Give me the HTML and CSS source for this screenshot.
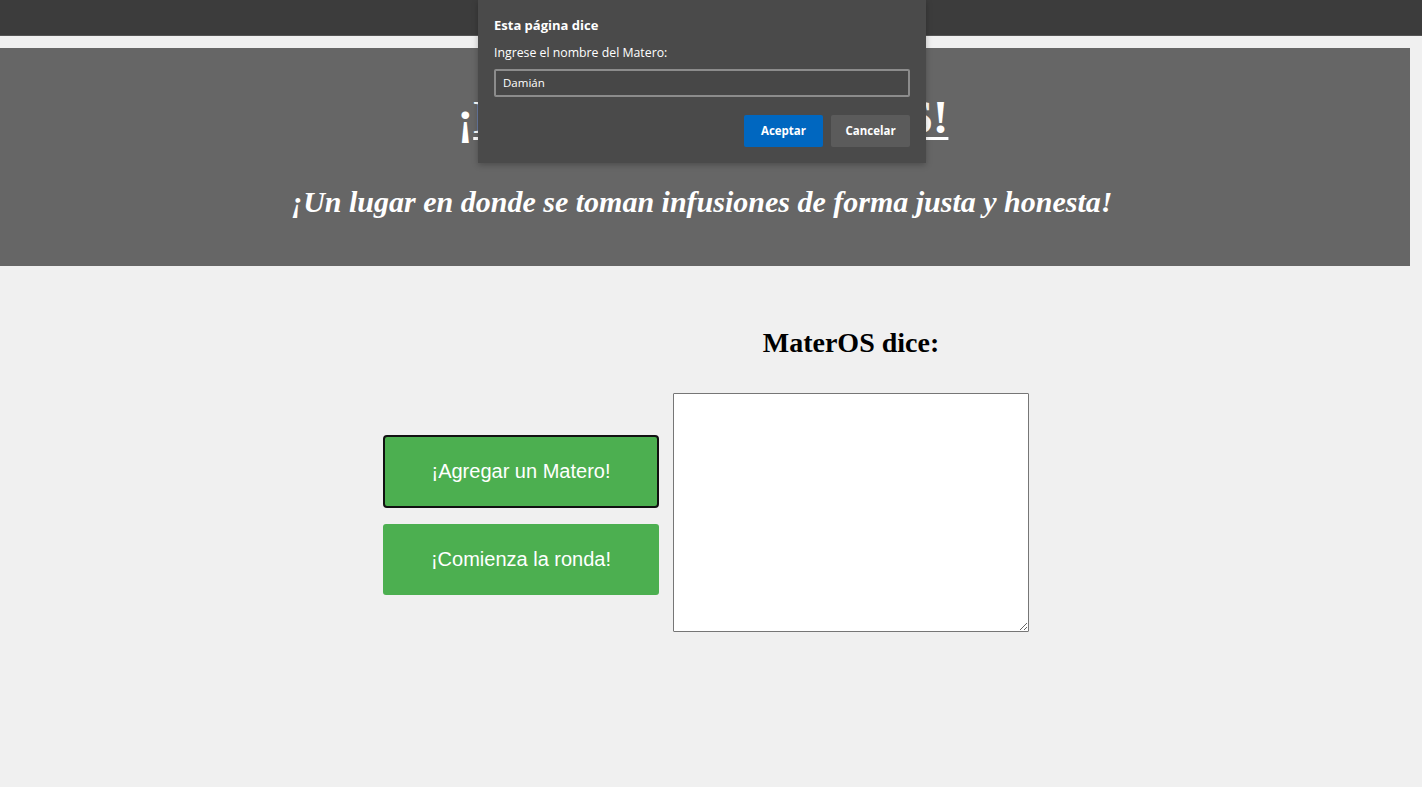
FILE: index.html
```html
<!DOCTYPE html>
<html lang="es">
<head>
<meta charset="utf-8">
<title>MaterOS</title>
<link rel="stylesheet" href="styles.css">
</head>
<body>
<div class="topbar"></div>
<header class="hero">
  <h1 class="hero-title">¡<u>Bienvenido a MaterOS!</u></h1>
  <p class="hero-sub">¡Un lugar en donde se toman infusiones de forma justa y honesta!</p>
</header>
<main class="stage">
  <div class="grid">
    <h2 class="says">MaterOS dice:</h2>
    <div class="actions">
      <button class="btn btn-focus">¡Agregar un Matero!</button>
      <button class="btn">¡Comienza la ronda!</button>
    </div>
    <textarea class="log"></textarea>
  </div>
</main>
<div class="dialog">
  <div class="dlg-title">Esta página dice</div>
  <div class="dlg-msg">Ingrese el nombre del Matero:</div>
  <div class="dlg-input">Damián</div>
  <div class="dlg-buttons">
    <span class="dlg-btn dlg-ok">Aceptar</span>
    <span class="dlg-btn dlg-cancel">Cancelar</span>
  </div>
</div>
</body>
</html>
```
FILE: styles.css
```css
* { box-sizing: border-box; }
html, body { margin: 0; padding: 0; }
body {
  background: #f0f0f0;
  font-family: "Liberation Serif", "Times New Roman", serif;
  height: 787px;
  overflow: hidden;
}
.topbar {
  height: 36px;
  background: #3c3c3c;
  border-bottom: 1px solid #555555;
  margin-bottom: 12px;
}
.hero {
  background: #666666;
  margin-right: 12px;
  height: 218px;
  padding-top: 43px;
  text-align: center;
  color: #ffffff;
}
.hero-title {
  margin: 0;
  padding-right: 4px;
  font-size: 47px;
  font-weight: bold;
  line-height: 53px;
}
.hero-title u { text-decoration-thickness: 3px; text-underline-offset: 4px; }
.hero-sub {
  margin: 40px 0 0;
  padding-right: 6px;
  font-size: 30px;
  font-style: italic;
  font-weight: bold;
  line-height: 36px;
}
.stage {
  display: flex;
  justify-content: center;
  padding-top: 61px;
  padding-right: 10px;
}
.grid {
  display: grid;
  grid-template-columns: 276px 356px;
  column-gap: 14px;
}
.says {
  grid-column: 2;
  grid-row: 1;
  margin: 0 0 34px;
  text-align: center;
  font-size: 28px;
  line-height: 32px;
  font-weight: bold;
  color: #000;
}
.actions {
  grid-column: 1;
  grid-row: 2;
  display: flex;
  flex-direction: column;
  gap: 16px;
  padding-top: 42px;
}
.btn {
  width: 276px;
  height: 71px;
  border: none;
  border-radius: 3px;
  background: #4caf50;
  color: #ffffff;
  font-family: "Liberation Sans", Arial, sans-serif;
  font-size: 20px;
  padding: 0;
}
.btn-focus {
  height: 73px;
  border: 2px solid #111111;
  border-radius: 4px;
}
.log {
  grid-column: 2;
  grid-row: 2;
  width: 356px;
  height: 239px;
  margin: 0;
  border: 1px solid #767676;
  background: #ffffff;
  border-radius: 1px;
}
.dialog {
  position: absolute;
  top: 0;
  left: 478px;
  width: 448px;
  height: 163px;
  background: #4a4a4a;
  padding: 16px 16px 0;
  color: #ffffff;
  font-family: "Open Sans", "Noto Sans", sans-serif;
  box-shadow: 0 2px 6px rgba(0,0,0,0.25);
}
.dlg-title {
  font-size: 13px;
  font-weight: bold;
  line-height: 18px;
}
.dlg-msg {
  margin-top: 10px;
  font-size: 12.3px;
  line-height: 18px;
}
.dlg-input {
  margin-top: 7px;
  width: 416px;
  height: 28px;
  border: 2px solid #8c8c8c;
  border-radius: 2px;
  background: #474747;
  font-size: 11.5px;
  line-height: 24px;
  padding-left: 7px;
}
.dlg-buttons {
  display: flex;
  justify-content: flex-end;
  gap: 8px;
  margin-top: 18px;
  width: 416px;
}
.dlg-btn {
  width: 79px;
  height: 32px;
  border-radius: 2px;
  font-size: 11.5px;
  font-weight: bold;
  line-height: 32px;
  text-align: center;
}
.dlg-ok { background: #0067c0; }
.dlg-cancel { background: #5b5b5b; }
```
